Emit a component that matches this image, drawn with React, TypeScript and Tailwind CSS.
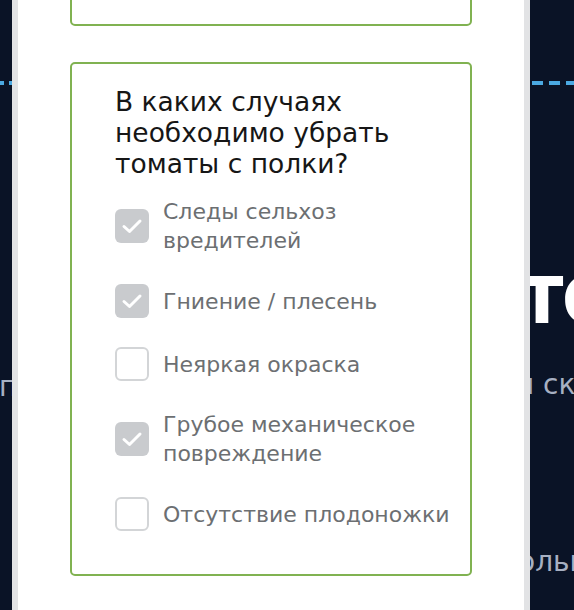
import React from 'react';

interface Option {
  label: string;
  checked: boolean;
}

const options: Option[] = [
  { label: 'Следы сельхоз вредителей', checked: true },
  { label: 'Гниение / плесень', checked: true },
  { label: 'Неяркая окраска', checked: false },
  { label: 'Грубое механическое повреждение', checked: true },
  { label: 'Отсутствие плодоножки', checked: false },
];

const dashes =
  'bg-[repeating-linear-gradient(90deg,#4ba9e2_0px,#4ba9e2_11px,transparent_11px,transparent_17px)]';

const CheckBox: React.FC<{ checked: boolean }> = ({ checked }) =>
  checked ? (
    <span className="flex h-[34px] w-[34px] shrink-0 items-center justify-center rounded-[6px] bg-[#c9cbce]">
      <svg width="22" height="22" viewBox="0 0 22 22" fill="none">
        <polyline points="3,11.5 8.5,16.5 19,6" stroke="white" strokeWidth="3" strokeLinecap="round" strokeLinejoin="round" />
      </svg>
    </span>
  ) : (
    <span className="block h-[34px] w-[34px] shrink-0 rounded-[6px] border-2 border-[#d3d5d7] bg-white" />
  );

export default function App() {
  return (
    <div className="flex h-[610px] w-[574px] overflow-hidden bg-[#0a1326] font-['DejaVu_Sans',sans-serif]">
      {/* page behind the modal, left edge */}
      <div className="flex w-[12px] shrink-0 flex-col overflow-hidden">
        <div className="ml-[-9px] mt-[81px] h-[4px] w-[40px] shrink-0 bg-[repeating-linear-gradient(90deg,#4ba9e2_0px,#4ba9e2_4px,transparent_4px,transparent_9px)]" />
        <span className="ml-[-1px] mt-[288px] whitespace-nowrap text-[28px] leading-none text-[#a7b0c2]">п</span>
      </div>

      {/* modal */}
      <div className="flex h-[610px] w-[518px] shrink-0 flex-col gap-[36px] border-x-[6px] border-[#e2e3e5] bg-white px-[52px]">
        <div className="-mt-[40px] h-[66px] shrink-0 rounded-[5px] border-2 border-[#80b251]" />
        <div className="shrink-0 rounded-[5px] border-2 border-[#80b251] pb-[43px] pl-[43px] pr-[16px] pt-[22px]">
          <h2 className="text-[26.5px] leading-[31px] text-[#161616]">
            В каких случаях
            <br />
            необходимо убрать
            <br />
            томаты с полки?
          </h2>
          <div className="mt-[18px] flex flex-col gap-[29px]">
            {options.map((o) => (
              <label key={o.label} className="flex items-center gap-[14px]">
                <CheckBox checked={o.checked} />
                <span className="max-w-[292px] text-[22px] leading-[29px] text-[#6c6f72]">{o.label}</span>
              </label>
            ))}
          </div>
        </div>
        <div className="h-[60px] shrink-0 rounded-[5px] border-2 border-[#eef4dd]" />
      </div>

      {/* page behind the modal, right edge */}
      <div className="flex min-w-0 flex-1 flex-col overflow-hidden">
        <div className={`ml-[2px] mt-[81px] h-[4px] w-[60px] shrink-0 ${dashes}`} />
        <span className="ml-[-10px] mt-[164px] whitespace-nowrap font-['Inter',sans-serif] text-[86px] font-bold leading-none text-white">то</span>
        <span className="ml-[-14px] mt-[36px] whitespace-nowrap text-[28px] leading-none text-[#a7b0c2]">и ск</span>
        <span className="ml-[-12px] mt-[149px] whitespace-nowrap text-[28px] leading-none text-[#a7b0c2]">ольн</span>
      </div>
    </div>
  );
}
